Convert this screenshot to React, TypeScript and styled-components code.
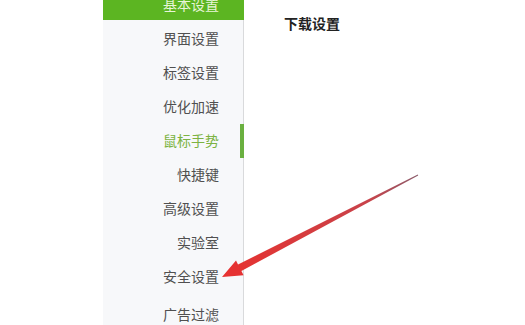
import React from 'react'
import styled, { createGlobalStyle } from 'styled-components'

const GlobalStyle = createGlobalStyle`
  html, body {
    margin: 0;
    padding: 0;
    background: #fff;
    overflow: hidden;
  }
  body {
    font-family: "Noto Sans CJK SC", "Noto Sans", sans-serif;
  }
`

const Page = styled.div`
  position: relative;
  display: flex;
  width: 525px;
  height: 325px;
  overflow: hidden;
  background: #fff;
`

const Sidebar = styled.nav`
  margin-left: 103px;
  width: 140px;
  height: 100%;
  background: #f7f8fa;
  border-right: 1px solid #d9dadc;
  display: flex;
  flex-direction: column;
`

const NavList = styled.div`
  display: flex;
  flex-direction: column;
  padding-top: 1px;
`

const NavItem = styled.div<{ $active?: boolean; $gap?: boolean }>`
  position: relative;
  height: 34px;
  line-height: 34px;
  padding-right: 24px;
  margin-top: ${({ $gap }) => ($gap ? '4px' : '0')};
  text-align: right;
  font-size: 14px;
  color: ${({ $active }) => ($active ? '#7cb342' : '#505050')};
  white-space: nowrap;
`

const CurrentItem = styled.div`
  margin-top: -12px;
  margin-right: -1px;
  height: 32px;
  line-height: 32px;
  padding-right: 25px;
  text-align: right;
  font-size: 14px;
  color: #e8f5d8;
  background: #5cb522;
`

const Marker = styled.span`
  position: absolute;
  right: -1px;
  top: 1px;
  width: 4px;
  height: 34px;
  background: #6ab040;
`

const Content = styled.main`
  flex: 1;
  padding: 14px 0 0 40px;
`

const Title = styled.h3`
  margin: 0;
  font-size: 14px;
  line-height: 18px;
  font-weight: bold;
  color: #222;
`

const ArrowLayer = styled.svg`
  position: absolute;
  left: 0;
  top: 0;
  pointer-events: none;
`

const items = ['界面设置', '标签设置', '优化加速', '鼠标手势', '快捷键', '高级设置', '实验室', '安全设置']

const App: React.FC = () => {
  return (
    <Page>
      <GlobalStyle />
      <Sidebar>
        <CurrentItem>基本设置</CurrentItem>
        <NavList>
          {items.map((label) => (
            <NavItem key={label} $active={label === '鼠标手势'}>
              {label}
              {label === '鼠标手势' && <Marker />}
            </NavItem>
          ))}
          <NavItem $gap>广告过滤</NavItem>
        </NavList>
      </Sidebar>
      <Content>
        <Title>下载设置</Title>
      </Content>
      <ArrowLayer width="525" height="325" viewBox="0 0 525 325">
        <defs>
          <linearGradient id="shaft" x1="418" y1="175" x2="222" y2="277" gradientUnits="userSpaceOnUse">
            <stop offset="0" stopColor="#8a5a6a" />
            <stop offset="0.25" stopColor="#c8434a" />
            <stop offset="1" stopColor="#e8312f" />
          </linearGradient>
          <filter id="soft" x="-10%" y="-10%" width="120%" height="120%">
            <feGaussianBlur stdDeviation="0.6" />
          </filter>
        </defs>
        <polygon
          filter="url(#soft)"
          fill="url(#shaft)"
          points="418.2,175.4 241.4,271.0 243.6,275.3 222,277 236,260.5 238.0,264.5 417.8,174.6"
        />
      </ArrowLayer>
    </Page>
  )
}

export default App
